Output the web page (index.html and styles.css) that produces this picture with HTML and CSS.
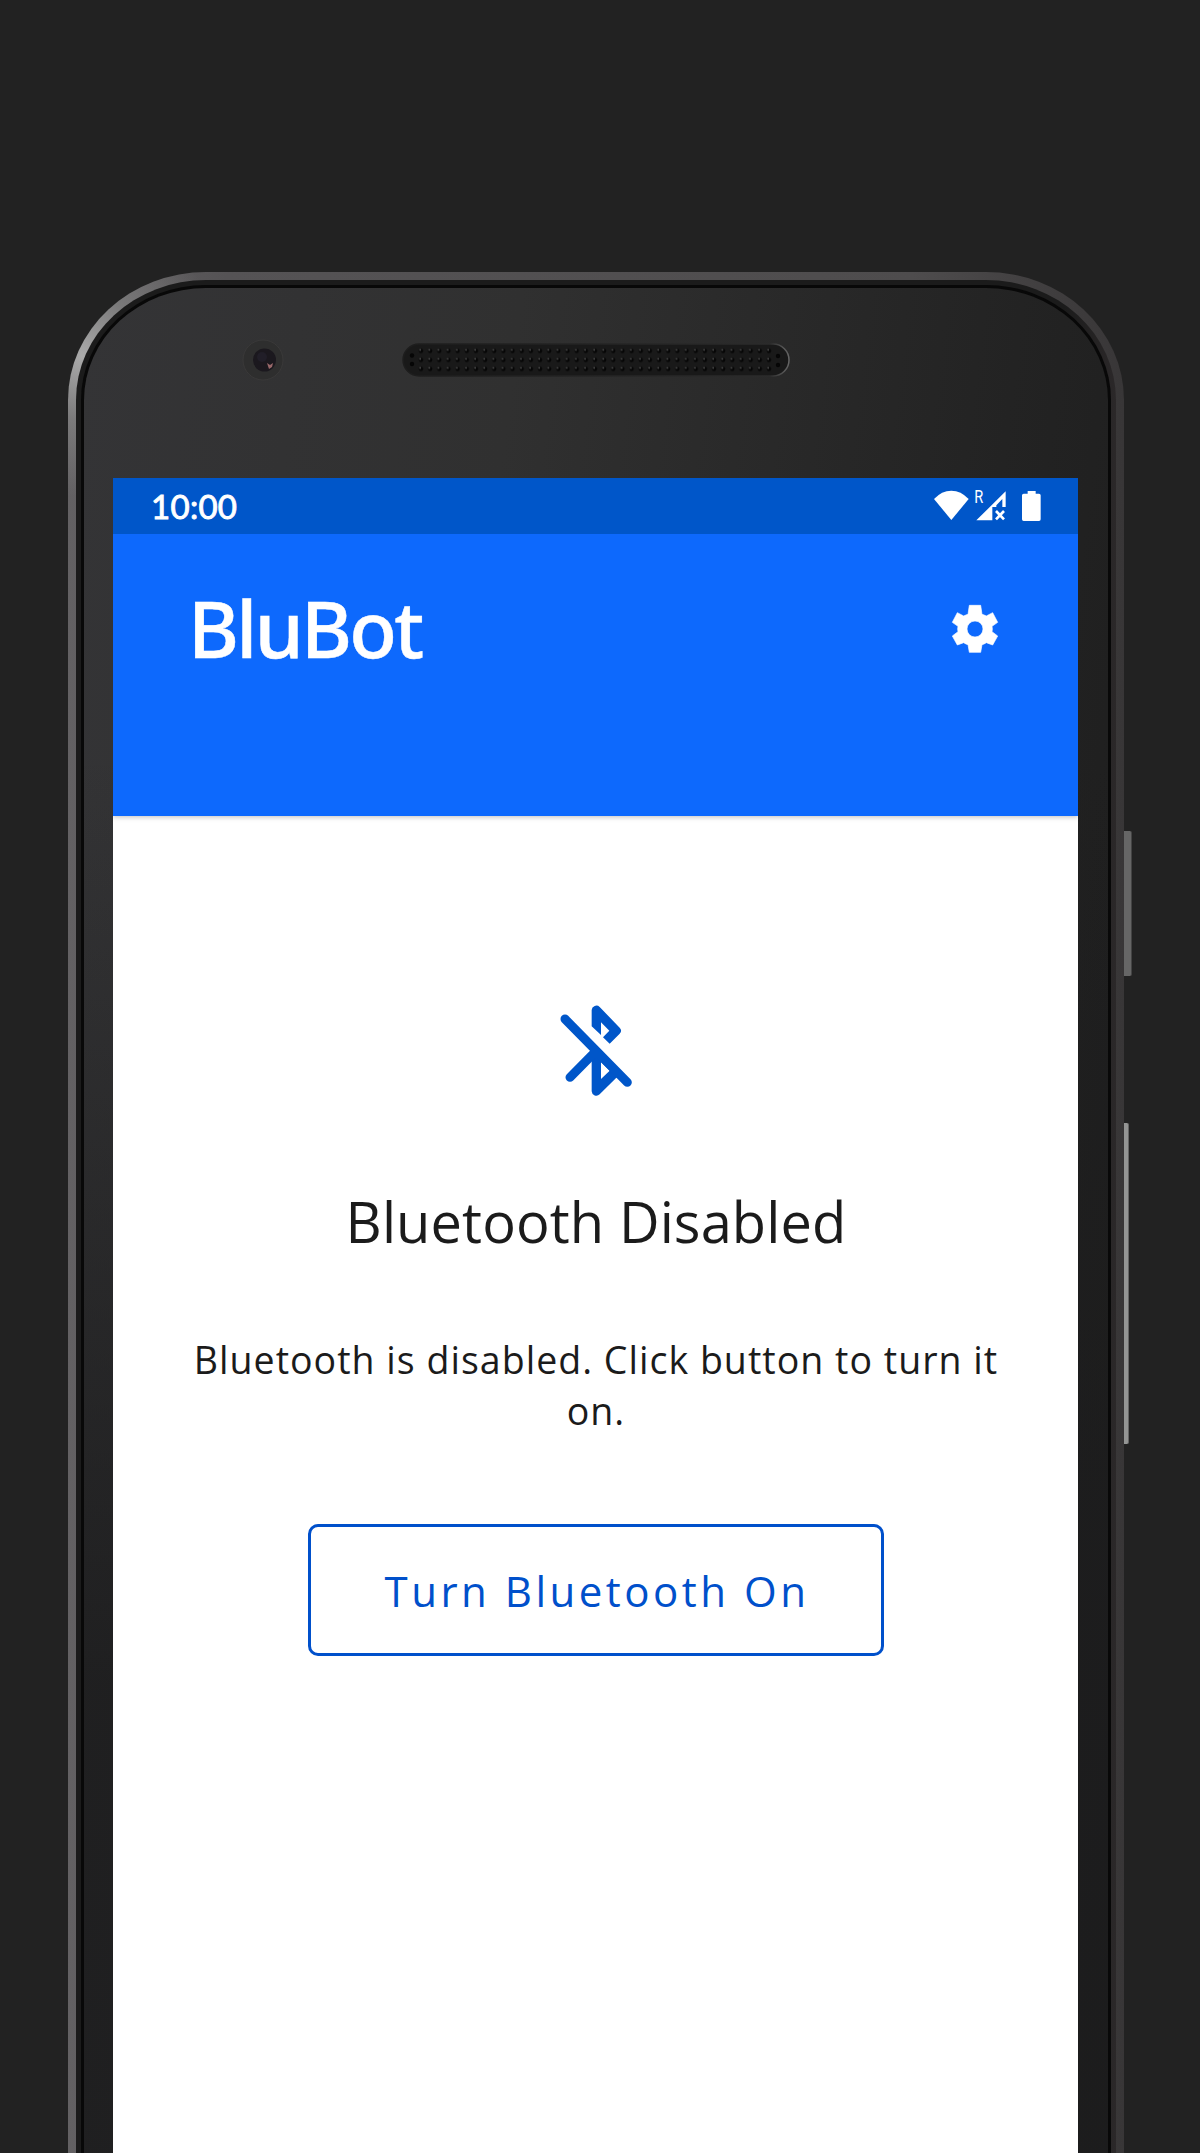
FILE: index.html
```html
<!DOCTYPE html>
<html lang="en">
<head>
<meta charset="utf-8">
<title>BluBot</title>
<link rel="stylesheet" href="styles.css">
</head>
<body>
<div class="phone">
  <span class="side-button power"></span>
  <span class="side-button volume"></span>
  <div class="ring">
    <div class="glass">
      <div class="forehead">
        <svg class="camera" width="42" height="42" viewBox="0 0 42 42">
          <circle cx="21" cy="21" r="20" fill="#2e2e2e" stroke="#3a3939" stroke-width="1"/>
          <circle cx="22.500" cy="21" r="11.500" fill="#1b181e"/>
          <circle cx="20" cy="18" r="5" fill="#211e28"/>
          <path d="M25 24l3 2 3-2-1 4-3 2z" fill="#99686a"/>
        </svg>
        <svg class="speaker" width="388" height="34" viewBox="0 0 388 34">
          <defs>
            <linearGradient id="lip" x1="0" x2="1"><stop offset="0" stop-color="#1d1d1d"/><stop offset=".95" stop-color="#2b2b2b"/><stop offset="1" stop-color="#666"/></linearGradient>
            <pattern id="holes" x="14.420" y="3.400" width="9.157" height="9" patternUnits="userSpaceOnUse">
              <circle cx="4.580" cy="4.500" r="2.200" fill="#060606"/>
              <circle cx="3.800" cy="3.500" r=".9" fill="#4b4b4b"/>
            </pattern>
          </defs>
          <rect x="1" y="1" width="386" height="32" rx="16" fill="#191919" stroke="url(#lip)" stroke-width="1.500"/>
          <rect x="14.420" y="3.400" width="357.100" height="27" fill="url(#holes)"/>
          <g fill="#060606"><circle cx="10" cy="12.500" r="2.200"/><circle cx="10" cy="21" r="2.200"/><circle cx="376" cy="13" r="2.200"/><circle cx="376" cy="22" r="2.200"/></g>
        </svg>
      </div>
      <div class="screen">
        <div class="status-bar">
          <span class="clock">10:00</span>
          <svg class="status-icons" width="110" height="56" viewBox="100 24 330 168" fill="#fff">
            <path d="M103 87Q126 62 155 62Q184 62 207 87L155 150Z"/>
            <text x="224" y="99" class="roaming" textLength="27" lengthAdjust="spacingAndGlyphs">R</text>
            <path d="M230 151L318 64V111H308V87L290 106V111H278V151Z"/>
            <path d="M289 123L313 148M313 123L289 148" stroke="#fff" stroke-width="8"/>
            <path d="M384 71V63H408V71H418Q423 71 423 76V148Q423 153 418 153H372Q367 153 367 148V76Q367 71 372 71Z"/>
          </svg>
        </div>
        <header class="app-bar">
          <h1 class="app-title">BluBot</h1>
          <svg class="settings" width="48" height="50" viewBox="153 402 144 150">
            <path fill="#fff" fill-rule="evenodd" stroke="#fff" stroke-width="2" stroke-linejoin="round" d="M208 406H242L246 433Q253 435 259 438L278 428L293 457L276 469Q278 477 276 485L293 498L278 525L259 518Q253 522 246 524L242 547H208L204 524Q197 522 191 518L172 525L157 498L174 485Q172 477 174 469L157 457L172 428L191 438Q197 435 204 433ZM225 453A24 24 0 1 0 225 501A24 24 0 1 0 225 453Z"/>
          </svg>
        </header>
        <main class="content">
          <svg class="bt-icon" width="74" height="94" viewBox="175 70 222 282" fill="#0056c9">
            <path d="M273 140V91A14 14 0 0 1 297 82L357 144A13 13 0 0 1 357 162L327 192L307 173L326 153L301 128V166Z"/>
            <path fill-rule="evenodd" d="M273 215V335A14 14 0 0 0 297 344L347 294L360 290L300 215ZM301 248L327 273L301 298Z"/>
            <path d="M193 118L380 308M208 293L285 215" fill="none" stroke="#0056c9" stroke-width="27" stroke-linecap="round"/>
          </svg>
          <h2 class="heading">Bluetooth Disabled</h2>
          <p class="message">Bluetooth is disabled. Click button to turn it on.</p>
          <button class="action">Turn Bluetooth On</button>
        </main>
      </div>
    </div>
  </div>
</div>
</body>
</html>
```
FILE: styles.css
```css
* { box-sizing: border-box; }

body {
  margin: 0;
  height: 2153px;
  padding: 272px 76px 0 68px;
  overflow: hidden;
  background: #222;
  font-family: "Open Sans", "Noto Sans", sans-serif;
}

/* Device frame: metal rim, dark ring, glass */
.phone {
  position: relative;
  height: 1881px;
  padding: 8px 8px 0;
  border-radius: 138px 138px 0 0 / 128px 128px 0 0;
  background:
    radial-gradient(circle 140px at 14px 84px, #aaa 0, rgba(140, 140, 140, 0.6) 45%, transparent 100%),
    linear-gradient(90deg, #636163 0, #555355 15%, #4e4c4d 80%, #383637 100%);
}

.side-button { position: absolute; left: 1056px; border-radius: 0 2px 2px 0; }
.power { top: 559px; width: 8px; height: 145px; background: #666; border-right: 1px solid #444; }
.volume { top: 851px; width: 5px; height: 321px; background: #949594; border-right: 1px solid #666; }

.ring {
  height: 100%;
  padding: 5px 5px 0;
  border-radius: 130px 130px 0 0 / 120px 120px 0 0;
  background: linear-gradient(90deg, #1b1b1b 0, #1b1b1b 95%, #2b2829 100%);
}

.glass {
  height: 100%;
  padding: 0 30px 0 29px;
  border: 3px solid #080808;
  border-bottom: 0;
  border-radius: 125px 125px 0 0 / 115px 115px 0 0;
  background:
    linear-gradient(180deg, transparent 0, transparent 25%, rgba(28, 28, 29, 0.85) 75%),
    linear-gradient(97deg, #343436 0, #303030 35%, #232323 75%, #1c1c1c 100%);
}

.forehead {
  display: flex;
  align-items: flex-start;
  height: 190px;
  padding: 51px 0 0 129px;
}
.camera { margin-right: 118px; }
.speaker { margin-top: 4px; }

.screen {
  height: 1675px;
  background: #fff;
}

.status-bar {
  display: flex;
  align-items: center;
  justify-content: space-between;
  height: 56px;
  padding: 0 35px 0 38px;
  background: #0056c9;
  color: #fff;
}
.clock {
  font: 400 33px/56px Lato, sans-serif;
  letter-spacing: 0.3px;
  -webkit-text-stroke: 0.9px #fff;
}
.roaming { font: 400 53px Roboto, sans-serif; }

.app-bar {
  display: flex;
  align-items: flex-start;
  justify-content: space-between;
  height: 282px;
  padding: 42px 79px 0 75px;
  background: #0d69fd;
  color: #fff;
  box-shadow: 0 1px 5px rgba(0, 0, 0, 0.25);
  clip-path: inset(0 0 -8px 0);
}
.app-title {
  margin: 0;
  font-family: "Noto Sans", "Open Sans", sans-serif;
  font-size: 78px;
  font-weight: 500;
  line-height: 105px;
  letter-spacing: -2.7px;
  -webkit-text-stroke: 0.5px #fff;
}
.settings { margin-top: 28px; }

.content {
  display: flex;
  flex-direction: column;
  align-items: center;
  padding: 187px 69px 0 70px;
  color: #1b1b1b;
}
.bt-icon { margin-right: 1px; }
.heading {
  margin: 86px 0 0;
  font-size: 56px;
  font-weight: 400;
  line-height: 76px;
  letter-spacing: 0.1px;
  white-space: nowrap;
}
.message {
  margin: 75px 0 0;
  font-size: 37.500px;
  line-height: 51px;
  letter-spacing: 1.02px;
  text-align: center;
}
.action {
  width: 576px;
  height: 132px;
  margin: 88px 0 0;
  padding: 0 0 0 2px;
  border: 3px solid #0050cb;
  border-radius: 10px;
  background: transparent;
  color: #0050cb;
  font-family: inherit;
  font-size: 42px;
  letter-spacing: 3.5px;
}
```
